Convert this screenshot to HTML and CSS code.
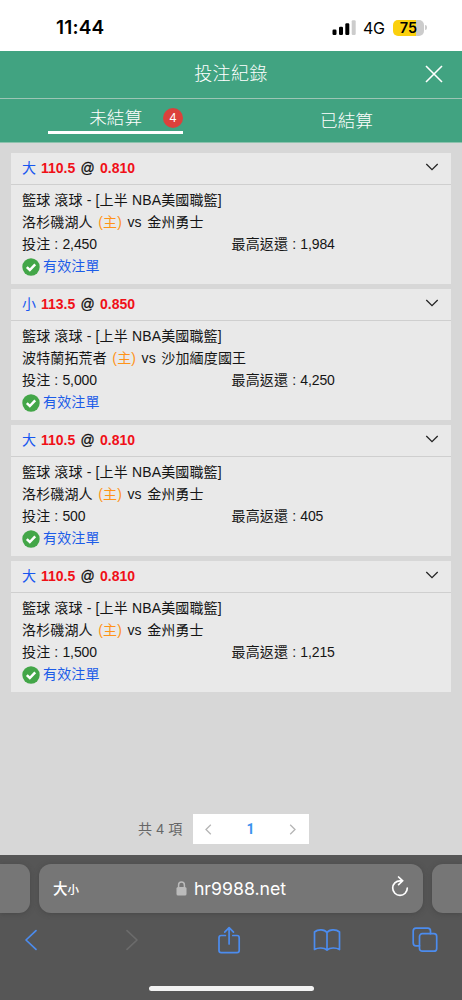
FILE: index.html
```html
<!DOCTYPE html>
<html lang="zh-Hant">
<head>
<meta charset="utf-8">
<meta name="viewport" content="width=device-width, initial-scale=1">
<title>投注紀錄</title>
<link rel="stylesheet" href="styles.css">
</head>
<body>
<div class="status">
  <span class="clock">11:44</span>
  <div class="indicators">
    <svg class="signal" width="24" height="16" viewBox="0 0 24 16"><rect x="0.5" y="9.5" width="4" height="5.5" rx="1.2"/><rect x="7" y="6.7" width="4" height="8.3" rx="1.2"/><rect x="13.3" y="3.3" width="4" height="11.7" rx="1.2"/><rect class="dim" x="19.7" y="0.3" width="4" height="14.7" rx="1.2"/></svg>
    <span class="network">4G</span>
    <span class="battery">75</span><span class="battery-tip"></span>
  </div>
</div>
<header class="titlebar">
  <h1 class="title">投注紀錄</h1>
  <svg class="close" width="18" height="18" viewBox="0 0 18 18"><path d="M1 1L17 17M17 1L1 17"/></svg>
</header>
<nav class="tabs">
  <div class="tab"><div class="tab-active">未結算<span class="count">4</span></div></div>
  <div class="tab tab-idle">已結算</div>
</nav>
<main class="page">
  <article class="card">
    <div class="card-head"><span class="pick">大</span><span class="odds">110.5 <span class="at">@</span> 0.810</span><svg class="chevron" width="14" height="8" viewBox="0 0 14 8"><path d="M1.3 1L7 6.6L12.7 1"/></svg></div>
    <div class="card-body">
      <p class="row league">籃球 滾球 - [上半 NBA美國職籃]</p>
      <p class="row teams">洛杉磯湖人 <span class="home">(主)</span> vs 金州勇士</p>
      <p class="row sums"><span>投注 : <span class="num">2,450</span></span><span>最高返還 : <span class="num">1,984</span></span></p>
      <p class="row valid"><svg width="18" height="18" viewBox="0 0 18 18"><circle cx="9" cy="9" r="8.7"/><path d="M4.8 9.2L7.8 12L13.2 6.3"/></svg>有效注單</p>
    </div>
  </article>
  <article class="card">
    <div class="card-head"><span class="pick">小</span><span class="odds">113.5 <span class="at">@</span> 0.850</span><svg class="chevron" width="14" height="8" viewBox="0 0 14 8"><path d="M1.3 1L7 6.6L12.7 1"/></svg></div>
    <div class="card-body">
      <p class="row league">籃球 滾球 - [上半 NBA美國職籃]</p>
      <p class="row teams">波特蘭拓荒者 <span class="home">(主)</span> vs 沙加緬度國王</p>
      <p class="row sums"><span>投注 : <span class="num">5,000</span></span><span>最高返還 : <span class="num">4,250</span></span></p>
      <p class="row valid"><svg width="18" height="18" viewBox="0 0 18 18"><circle cx="9" cy="9" r="8.7"/><path d="M4.8 9.2L7.8 12L13.2 6.3"/></svg>有效注單</p>
    </div>
  </article>
  <article class="card">
    <div class="card-head"><span class="pick">大</span><span class="odds">110.5 <span class="at">@</span> 0.810</span><svg class="chevron" width="14" height="8" viewBox="0 0 14 8"><path d="M1.3 1L7 6.6L12.7 1"/></svg></div>
    <div class="card-body">
      <p class="row league">籃球 滾球 - [上半 NBA美國職籃]</p>
      <p class="row teams">洛杉磯湖人 <span class="home">(主)</span> vs 金州勇士</p>
      <p class="row sums"><span>投注 : <span class="num">500</span></span><span>最高返還 : <span class="num">405</span></span></p>
      <p class="row valid"><svg width="18" height="18" viewBox="0 0 18 18"><circle cx="9" cy="9" r="8.7"/><path d="M4.8 9.2L7.8 12L13.2 6.3"/></svg>有效注單</p>
    </div>
  </article>
  <article class="card">
    <div class="card-head"><span class="pick">大</span><span class="odds">110.5 <span class="at">@</span> 0.810</span><svg class="chevron" width="14" height="8" viewBox="0 0 14 8"><path d="M1.3 1L7 6.6L12.7 1"/></svg></div>
    <div class="card-body">
      <p class="row league">籃球 滾球 - [上半 NBA美國職籃]</p>
      <p class="row teams">洛杉磯湖人 <span class="home">(主)</span> vs 金州勇士</p>
      <p class="row sums"><span>投注 : <span class="num">1,500</span></span><span>最高返還 : <span class="num">1,215</span></span></p>
      <p class="row valid"><svg width="18" height="18" viewBox="0 0 18 18"><circle cx="9" cy="9" r="8.7"/><path d="M4.8 9.2L7.8 12L13.2 6.3"/></svg>有效注單</p>
    </div>
  </article>
  <div class="pagination">
    <span class="total">共 4 項</span>
    <div class="pager">
      <svg width="7" height="11" viewBox="0 0 7 11"><path d="M5.8 .8L1 5.5L5.8 10.2"/></svg>
      <span class="current">1</span>
      <svg width="7" height="11" viewBox="0 0 7 11"><path d="M1.2 .8L6 5.5L1.2 10.2"/></svg>
    </div>
  </div>
</main>
<footer class="browser">
  <div class="addresses">
    <div class="peek peek-left"></div>
    <div class="address">
      <span class="textsize">大<span class="small">小</span></span>
      <span class="host"><svg class="lock" width="11" height="15" viewBox="0 0 11 15"><rect x="0.5" y="6" width="10" height="8.6" rx="1.6"/><path d="M2.6 7V4A2.9 2.9 0 0 1 8.4 4V7"/></svg>hr9988.net</span>
      <svg class="reload" width="18" height="22" viewBox="0 0 18 22"><path d="M9 4.8A7.3 7.3 0 1 0 16.3 12.1M9 4.8H11.2M7.6 1L11.6 4.8L7.6 8.6"/></svg>
    </div>
    <div class="peek peek-right"></div>
  </div>
  <div class="tools">
    <svg width="14" height="22" viewBox="0 0 14 22"><path d="M12 1.6L2 11L12 20.4"/></svg>
    <svg class="off" width="14" height="22" viewBox="0 0 14 22"><path d="M2 1.6L12 11L2 20.4"/></svg>
    <svg width="24" height="28" viewBox="0 0 24 28"><path d="M8.4 9.5H4.2Q2 9.5 2 11.7V24.5Q2 26.7 4.2 26.7H20Q22.2 26.7 22.2 24.5V11.7Q22.2 9.5 20 9.5H15.8M12.1 18V2M7.7 6.2L12.1 1.7L16.5 6.2"/></svg>
    <svg width="28" height="24" viewBox="0 0 28 24"><path d="M14 4.5C11.5 1.2 5 1 1.5 4V21.5C5 19.4 11 19.5 14 22C17 19.5 23 19.4 26.5 21.5V4C23 1 16.5 1.2 14 4.5V22"/></svg>
    <svg width="26" height="26" viewBox="0 0 26 26"><path d="M7.5 18.8H4Q1.2 18.8 1.2 16V4Q1.2 1.2 4 1.2H15.7Q18.5 1.2 18.5 4V6.7"/><rect x="7.5" y="6.7" width="17.2" height="17.5" rx="2.8"/></svg>
  </div>
  <div class="home-bar"></div>
</footer>
</body>
</html>
```
FILE: styles.css
```css
* { box-sizing: border-box; }
body {
  margin: 0;
  width: 462px;
  height: 1000px;
  display: flex;
  flex-direction: column;
  overflow: hidden;
  background: #d7d7d7;
  color: #151515;
  font-family: "Liberation Sans", "Noto Sans CJK TC", sans-serif;
}
svg { display: block; flex: none; fill: none; }
p, h1 { margin: 0; }
.status {
  height: 51px;
  flex: none;
  display: flex;
  justify-content: space-between;
  align-items: center;
  padding: 4px 35px 0 56px;
  background: #fff;
  color: #000;
  font-family: Inter, sans-serif;
}
.clock { font-size: 19px; font-weight: 600; letter-spacing: 0.2px; }
.indicators { display: flex; align-items: center; }
.signal { fill: #000; }
.signal .dim { fill: #ccc; }
.network { margin-left: 7px; width: 30px; font-size: 16px; letter-spacing: -0.3px; }
.battery {
  width: 31px;
  height: 16px;
  border-radius: 5px;
  background: linear-gradient(90deg, #fbd00d 75%, #ccc 75%);
  font-size: 14.5px;
  font-weight: 600;
  line-height: 16px;
  text-align: center;
}
.battery-tip { width: 2px; height: 5px; margin-left: 1px; border-radius: 0 2px 2px 0; background: #ccc; }
.titlebar {
  height: 48px;
  flex: none;
  display: grid;
  grid-template-columns: 1fr auto 1fr;
  align-items: center;
  padding: 0 19px 2px;
  background: #41a381;
  color: #fff;
  border-bottom: 1px solid #9cc5b5;
}
.title { grid-column: 2; font-size: 18px; font-weight: 300; letter-spacing: 0.4px; line-height: 24px; }
.close { justify-self: end; stroke: #fff; stroke-width: 1.6; }
.tabs { height: 44px; flex: none; display: flex; background: #41a381; border-bottom: 1px solid #8dc2ad; color: #fff; font-size: 17.6px; font-weight: 300; }
.tab { flex: 1; display: flex; justify-content: center; }
.tab-active { width: 135px; height: 35px; border-bottom: 3px solid #fff; display: flex; align-items: center; justify-content: flex-end; padding-top: 3px; }
.count { width: 20px; height: 20px; margin: 2px 0 0 21px; border-radius: 50%; background: #dc403b; font-size: 12.5px; line-height: 20px; text-align: center; }
.tab-idle { align-items: center; padding-bottom: 2px; }
.page { height: 712px; flex: none; padding: 10px 11px 0; display: flex; flex-direction: column; gap: 5px; }
.card { height: 131px; flex: none; background: #e9e9e9; }
.card-head { height: 32px; padding: 0 12px 1px 11px; display: flex; align-items: center; border-bottom: 1px solid #cfcfcf; font-size: 14px; }
.pick { width: 19px; margin-bottom: 2px; color: #1757f0; font-weight: 400; }
.odds { color: #f01018; font-weight: 700; white-space: pre; word-spacing: 1.4px; }
.at { color: #111; font-weight: 400; -webkit-text-stroke: 0.3px #111; }
.chevron { margin: 0 0 3px auto; stroke: #222; stroke-width: 1.3; }
.card-body { padding: 5px 11px 0; font-size: 14px; }
.row { height: 21.8px; line-height: 21.8px; white-space: pre; letter-spacing: 0.15px; }
.teams { word-spacing: 1.4px; }
.home { color: #ff9318; }
.sums { display: grid; grid-template-columns: 209.5px 1fr; }
.num { letter-spacing: -0.1px; }
.valid { display: flex; align-items: center; gap: 3px; color: #1c5ce8; padding-top: 2px; }
.valid circle { fill: #43a648; }
.valid path { stroke: #fff; stroke-width: 2.5; }
.valid svg { margin-bottom: 1px; }
.pagination { display: flex; align-items: center; margin: 117px 0 0 127px; }
.total { width: 55px; margin-bottom: 3px; color: #666; font-size: 14px; letter-spacing: 0.2px; white-space: nowrap; }
.pager { width: 116px; height: 30px; background: #fff; display: flex; align-items: center; justify-content: space-between; padding: 0 13px 0 12px; }
.pager svg { stroke: #b5b5b5; stroke-width: 1.3; }
.current { color: #3b93ee; font: 700 14px Roboto, sans-serif; }
.browser { height: 145px; flex: none; background: #565656; }
.addresses { height: 58px; padding-top: 9px; display: flex; justify-content: space-between; }
.peek, .address { height: 49px; background: #767676; box-shadow: 0 1px 5px #484848; }
.peek-left { width: 30px; border-radius: 0 11px 11px 0; }
.peek-right { width: 30px; border-radius: 11px 0 0 11px; }
.address { width: 384px; border-radius: 12px; display: grid; grid-template-columns: 1fr auto 1fr; align-items: center; padding: 0 14px; color: #fff; }
.textsize { margin-bottom: 2px; font-size: 14.5px; font-weight: 500; }
.small { font-size: 11.5px; }
.host { display: flex; align-items: center; gap: 7px; font: 400 17.7px Inter, sans-serif; }
.lock rect { fill: #bbb; }
.lock path { stroke: #bbb; stroke-width: 1.5; }
.reload { justify-self: end; margin-bottom: 3px; stroke: #fff; stroke-width: 1.7; stroke-linecap: round; }
.tools {
  height: 54px;
  display: grid;
  grid-template-columns: 14px 187px 7px 189px 7px;
  justify-items: center;
  align-items: center;
  padding: 0 0 1px 24px;
}
.tools svg { stroke: #4c8cee; stroke-width: 1.7; stroke-linecap: round; stroke-linejoin: round; }
.tools .off { stroke: #6b6b6b; }
.home-bar { width: 165px; height: 5px; margin: 19px auto 0; border-radius: 3px; background: #f2f2f2; }
```
